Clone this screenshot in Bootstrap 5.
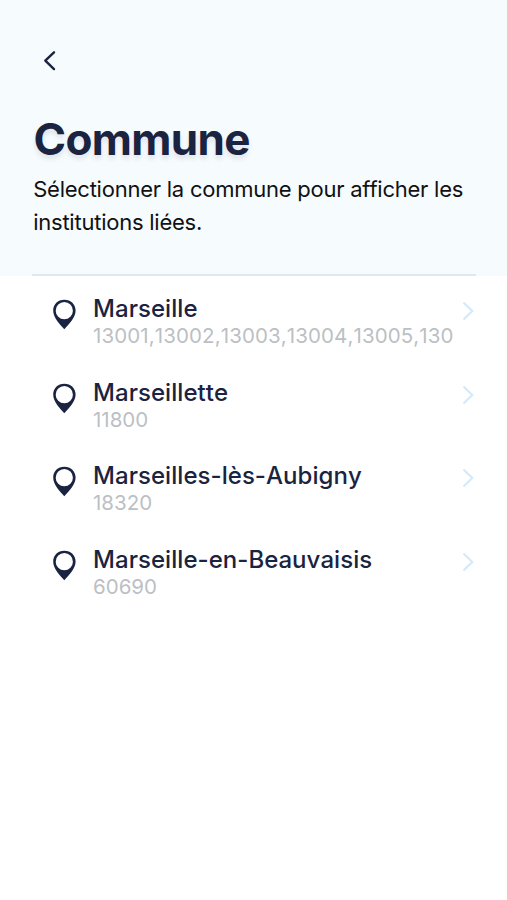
<!DOCTYPE html>
<html lang="fr">
<head>
<meta charset="utf-8">
<meta name="viewport" content="width=device-width, initial-scale=1">
<title>Commune</title>
<link rel="stylesheet" href="https://cdn.jsdelivr.net/npm/bootstrap@5.3.0/dist/css/bootstrap.min.css">
<style>
body{font-family:Inter,"Liberation Sans",sans-serif;color:#1a2340;background:#fff}
.hero{background:#f6fbfe;height:276px;padding:49px 31px 0 32px}
.back-btn{width:36px;height:24px;line-height:0}
.page-title{font-size:44px;line-height:54px;font-weight:700;letter-spacing:-.65px;margin:39px 0 0 1.5px;text-shadow:0 4px 5px rgba(26,33,66,.1)}
.intro{font-size:22px;line-height:32.5px;letter-spacing:-.24px;color:#111;margin:7px 0 0 1.200px;white-space:nowrap}
.rule{height:2px;background:#dce8f3}
.places{padding:18px 32px 0 52px}
.place{height:83.6px}
.pin{width:25px;height:32px;margin-top:5px}
.place-text{margin-left:16px;width:362px}
.place-name{font-size:24px;line-height:30px;font-weight:500;letter-spacing:.05px;font-kerning:none;white-space:nowrap}
.place-code{font-size:20.5px;line-height:24px;color:#bcbfc4;font-kerning:none;white-space:nowrap}
.code-list{letter-spacing:.11px}
.chev{width:14px;height:20px;margin-top:7px}
</style>
<script src="https://cdn.jsdelivr.net/npm/bootstrap@5.3.0/dist/js/bootstrap.bundle.min.js"></script>
</head>
<body>
<svg class="d-none"><defs>
<symbol id="pin" viewBox="0 0 25 32"><path fill-rule="evenodd" fill="#1a2340" d="M12.300 .7C5.800 .7 1.200 5.300 1.200 11.500c0 7.500 6.600 13.500 11.100 18.800C16.800 25 23.600 19 23.600 11.500 23.600 5.300 18.900 .7 12.300 .7zm0 2.400a8.600 8.600 0 1 1 0 17.200 8.600 8.600 0 0 1 0-17.200z"/></symbol>
<symbol id="chev" viewBox="0 0 14 20"><path d="M2.500 1.500l8.700 8.500-8.700 8.500" fill="none" stroke="#d5eafa" stroke-width="2.300"/></symbol>
</defs></svg>
<header class="hero d-flex flex-column">
<a href="#" class="back-btn d-block" aria-label="Retour"><svg width="36" height="24" viewBox="0 0 36 24"><path d="M22 3.300L13.300 11.700l8.700 8.400" fill="none" stroke="#1a2340" stroke-width="2.400" stroke-linecap="round" stroke-linejoin="round"/></svg></a>
<h1 class="page-title">Commune</h1>
<p class="intro mb-0">Sélectionner la commune pour afficher les<br>institutions liées.</p>
<div class="rule mt-auto"></div>
</header>
<main class="places">
<ul class="list-unstyled m-0">
<li class="place d-flex align-items-start"><svg class="pin"><use href="#pin"/></svg><div class="place-text"><div class="place-name">Marseille</div><div class="place-code code-list">13001,13002,13003,13004,13005,130</div></div><svg class="chev ms-auto"><use href="#chev"/></svg></li>
<li class="place d-flex align-items-start"><svg class="pin"><use href="#pin"/></svg><div class="place-text"><div class="place-name">Marseillette</div><div class="place-code">11800</div></div><svg class="chev ms-auto"><use href="#chev"/></svg></li>
<li class="place d-flex align-items-start"><svg class="pin"><use href="#pin"/></svg><div class="place-text"><div class="place-name">Marseilles-lès-Aubigny</div><div class="place-code">18320</div></div><svg class="chev ms-auto"><use href="#chev"/></svg></li>
<li class="place d-flex align-items-start"><svg class="pin"><use href="#pin"/></svg><div class="place-text"><div class="place-name">Marseille-en-Beauvaisis</div><div class="place-code">60690</div></div><svg class="chev ms-auto"><use href="#chev"/></svg></li>
</ul>
</main>
</body>
</html>
